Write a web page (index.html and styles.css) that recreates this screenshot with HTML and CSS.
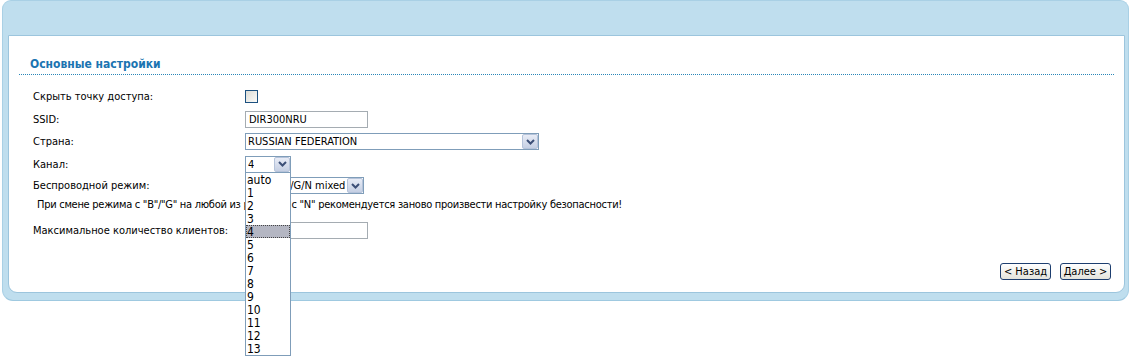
FILE: index.html
```html
<!DOCTYPE html>
<html lang="ru">
<head>
    <meta charset="UTF-8">
    <title>Основные настройки</title>
    <link rel="stylesheet" href="styles.css">
</head>
<body>
    <div class="panel">
        <div class="content">
            <div class="section">
                <h2 class="section-title">Основные настройки</h2>
                <div class="rows">
                    <div class="row row-tall">
                        <div class="label">Скрыть точку доступа:</div>
                        <div class="field"><span class="checkbox"></span></div>
                    </div>
                    <div class="row">
                        <div class="label">SSID:</div>
                        <div class="field"><div class="input">DIR300NRU</div></div>
                    </div>
                    <div class="row row-tall">
                        <div class="label">Страна:</div>
                        <div class="field">
                            <div class="select country">
                                <span class="select-text">RUSSIAN FEDERATION</span>
                                <span class="arrow"><svg width="9" height="6" viewBox="0 0 9 6"><path d="M1 1 L4.5 4.5 L8 1" fill="none" stroke="#3c4f77" stroke-width="2"/></svg></span>
                            </div>
                        </div>
                    </div>
                    <div class="row">
                        <div class="label">Канал:</div>
                        <div class="field">
                            <div class="select channel">
                                <span class="select-text">4</span>
                                <span class="arrow"><svg width="9" height="6" viewBox="0 0 9 6"><path d="M1 1 L4.5 4.5 L8 1" fill="none" stroke="#3c4f77" stroke-width="2"/></svg></span>
                                <ul class="dropdown">
                                    <li>auto</li>
                                    <li>1</li>
                                    <li>2</li>
                                    <li>3</li>
                                    <li class="active">4</li>
                                    <li>5</li>
                                    <li>6</li>
                                    <li>7</li>
                                    <li>8</li>
                                    <li>9</li>
                                    <li>10</li>
                                    <li>11</li>
                                    <li>12</li>
                                    <li>13</li>
                                </ul>
                            </div>
                        </div>
                    </div>
                    <div class="row row-short">
                        <div class="label">Беспроводной режим:</div>
                        <div class="field">
                            <div class="select mode">
                                <span class="select-text"><span class="std">802.11 B</span>/G/N mixed</span>
                                <span class="arrow"><svg width="9" height="6" viewBox="0 0 9 6"><path d="M1 1 L4.5 4.5 L8 1" fill="none" stroke="#3c4f77" stroke-width="2"/></svg></span>
                            </div>
                        </div>
                    </div>
                    <div class="note">При смене режима с "B"/"G" на любой из режимов с "N" рекомендуется заново произвести настройку безопасности!</div>
                    <div class="row row-short row-clients">
                        <div class="label">Максимальное количество клиентов:</div>
                        <div class="field"><div class="input"></div></div>
                    </div>
                </div>
            </div>
            <div class="buttons">
                <button class="btn">&lt; Назад</button>
                <button class="btn">Далее &gt;</button>
            </div>
        </div>
    </div>
</body>
</html>
```

FILE: styles.css
```css
html {
    height: 360px;
}
body {
    margin: 0;
    min-height: 360px;
    background: #fff;
    font-family: 'DejaVu Sans Condensed', 'DejaVu Sans', sans-serif;
    font-stretch: condensed;
    font-size: 11px;
    color: #000;
}
.panel {
    box-sizing: border-box;
    margin-left: 2px;
    width: 1127px;
    background: #bfdeee;
    border: 1px solid #a9d0e5;
    border-bottom-color: #9fc9e0;
    border-radius: 9px 9px 11px 11px;
    padding: 34px 3px 7px 5px;
}
.content {
    background: #fff;
    border: 1px solid #9cc5dd;
    border-radius: 0 0 9px 9px;
    padding: 20px 0 12px 10px;
}
.section {
    margin-right: 10px;
}
.section-title {
    margin: 0;
    padding: 0 0 2px 11px;
    font-size: 12px;
    line-height: 16px;
    font-weight: bold;
    color: #1b74b1;
    border-bottom: 1px dotted #2a86b8;
}
.rows {
    padding-top: 10px;
    padding-left: 14px;
}
.row {
    display: flex;
    align-items: center;
    height: 22px;
}
.row-tall {
    height: 23px;
}
.row-short {
    height: 21px;
}
.label {
    width: 212px;
    flex-shrink: 0;
}
.field {
    display: flex;
    align-items: center;
}
.checkbox {
    display: block;
    width: 11px;
    height: 11px;
    border: 1px solid #1c5180;
    background: linear-gradient(135deg, #dcdcd6, #fbfbf9);
}
.input {
    box-sizing: border-box;
    width: 123px;
    height: 17px;
    border: 1px solid #a5acb2;
    padding: 1px 3px;
    line-height: 13px;
    background: #fff;
}
.select {
    position: relative;
    box-sizing: border-box;
    height: 17px;
    border: 1px solid #7f9db9;
    background: #fff;
    display: flex;
    align-items: center;
    justify-content: space-between;
    padding-left: 2px;
}
.select-text {
    white-space: nowrap;
    overflow: hidden;
    line-height: 13px;
}
.country {
    width: 294px;
}
.channel {
    width: 46px;
}
.mode {
    width: 119px;
}
.std {
    letter-spacing: -0.3px;
}
.arrow {
    display: flex;
    align-items: center;
    justify-content: center;
    box-sizing: border-box;
    width: 16px;
    height: 15px;
    flex-shrink: 0;
    border: 1px solid #b5c3da;
    border-radius: 2px;
    background: linear-gradient(#e8ecf6, #c5cfe3);
}
.note {
    height: 17px;
    line-height: 17px;
    padding-left: 4px;
    letter-spacing: -0.27px;
}
.row-clients {
    margin-top: 7px;
}
.dropdown {
    position: absolute;
    z-index: 5;
    left: -1px;
    top: 15px;
    width: 46px;
    box-sizing: border-box;
    margin: 0;
    padding: 0;
    list-style: none;
    background: #fff;
    border: 1px solid #7f9db9;
}
.dropdown li {
    height: 13px;
    line-height: 15px;
    padding-left: 1px;
    font-size: 12px;
}
.dropdown li.active {
    background: #b4b6c2;
    outline: 1px dotted #444;
    outline-offset: -1px;
}
.buttons {
    display: flex;
    justify-content: flex-end;
    gap: 9px;
    margin-top: 22px;
    padding-right: 13px;
}
.btn {
    font-family: 'DejaVu Sans Condensed', 'DejaVu Sans', sans-serif;
    font-stretch: condensed;
    font-size: 11px;
    height: 17px;
    width: 51px;
    padding: 0;
    border: 1px solid #1d3e6f;
    border-radius: 3px;
    background: linear-gradient(#ffffff, #e3e3dc);
    color: #000;
    line-height: 14px;
}
```
